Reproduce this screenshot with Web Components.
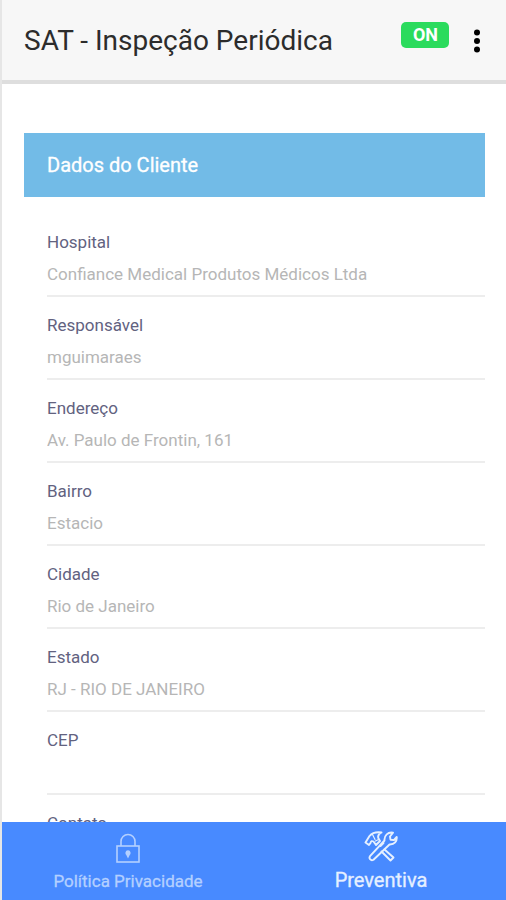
<!DOCTYPE html>
<html lang="pt-BR">
<head>
<meta charset="utf-8">
<meta name="viewport" content="width=device-width, initial-scale=1">
<title>SAT - Inspeção Periódica</title>
<style>
body { margin: 0; font-family: Roboto, "Liberation Sans", sans-serif; background: #fff; }
</style>
</head>
<body>
<sat-app>
  <sat-header slot="header" status="ON">SAT - Inspeção Periódica</sat-header>
  <sat-section heading="Dados do Cliente">
    <sat-field label="Hospital" value="Confiance Medical Produtos Médicos Ltda"></sat-field>
    <sat-field label="Responsável" value="mguimaraes"></sat-field>
    <sat-field label="Endereço" value="Av. Paulo de Frontin, 161"></sat-field>
    <sat-field label="Bairro" value="Estacio"></sat-field>
    <sat-field label="Cidade" value="Rio de Janeiro"></sat-field>
    <sat-field label="Estado" value="RJ - RIO DE JANEIRO"></sat-field>
    <sat-field label="CEP" value=""></sat-field>
    <sat-field label="Contato" value=""></sat-field>
  </sat-section>
  <sat-tabs slot="footer">
    <sat-tab icon="lock">Política Privacidade</sat-tab>
    <sat-tab icon="tools" selected>Preventiva</sat-tab>
  </sat-tabs>
</sat-app>
<script>
const define = (name, render) => customElements.define(name, class extends HTMLElement {
  constructor() {
    super();
    this.attachShadow({ mode: 'open' });
  }
  connectedCallback() {
    this.shadowRoot.innerHTML = render(this);
  }
});

define('sat-app', () => `
  <style>
    :host { display: flex; flex-direction: column; height: 100vh; box-sizing: border-box; border-left: 2px solid #e6e6e6; }
    main { flex: 1; min-height: 0; overflow-y: auto; scrollbar-width: none; padding: 49px 21px 20px 22px; }
  </style>
  <slot name="header"></slot>
  <main><slot></slot></main>
  <slot name="footer"></slot>`);

define('sat-header', el => `
  <style>
    :host { display: flex; align-items: center; height: 78px; padding: 2px 19px 0 22px; background: #f7f7f7; border-bottom: 4px solid #dedede; }
    h1 { flex: 1; margin: 0; font-size: 28px; line-height: 36px; font-weight: 400; color: #2c2c2c; white-space: nowrap; }
    .status { align-self: flex-start; margin: 20px 18px 0 0; width: 48px; padding-left: 1px; box-sizing: border-box; border-radius: 5px; background: #2bdb5d; color: #fff; font-size: 18px; line-height: 26px; font-weight: 700; text-align: center; }
    button { border: 0; background: none; padding: 0; width: 20px; height: 32px; }
    svg { display: block; margin: auto; }
  </style>
  <h1><slot></slot></h1>
  <span class="status">${el.getAttribute('status')}</span>
  <button aria-label="Menu"><svg width="8" height="24" viewBox="0 0 8 24"><circle cx="4" cy="3.4" r="3"/><circle cx="4" cy="12" r="3"/><circle cx="4" cy="20.6" r="3"/></svg></button>`);

define('sat-section', el => `
  <style>
    :host { display: block; }
    h2 { margin: 0 0 17px; padding: 0 23px; font-size: 20px; line-height: 64px; font-weight: 400; color: #fff; background: #72bbe7; -webkit-text-stroke: 0.3px #fff; }
    .fields { padding-left: 23px; }
  </style>
  <h2>${el.getAttribute('heading')}</h2>
  <div class="fields"><slot></slot></div>`);

define('sat-field', el => `
  <style>
    :host { display: flex; flex-direction: column; gap: 11px; padding: 18px 0 10px; border-bottom: 2px solid #ededed; }
    label { font-size: 17px; line-height: 20px; color: #62627f; }
    input { width: 100%; height: 22px; padding: 0; border: 0; outline: 0; background: none; font: 400 17px/22px Roboto, "Liberation Sans", sans-serif; color: #b6b6b6; }
  </style>
  <label for="value">${el.getAttribute('label')}</label>
  <input id="value" type="text" readonly value="${el.getAttribute('value')}">`);

define('sat-tabs', () => `
  <style>
    :host { display: grid; grid-template-columns: 1fr 1fr; height: 78px; background: #488aff; }
  </style>
  <slot></slot>`);

const icons = {
  lock: `<svg width="26" height="32" viewBox="0 0 26 32" fill="none" stroke="currentColor" stroke-width="1.6"><rect x="2" y="13" width="22" height="16"/><path d="M6 13V8.500a7 7 0 0 1 14 0V13"/><path d="M13 18a2 2 0 0 1 1 3.600l-1 2-1-2a2 2 0 0 1 1-3.600z" fill="currentColor"/></svg>`,
  tools: `<svg width="34" height="32" viewBox="0 0 34 32" fill="none" stroke="currentColor" stroke-width="1.9" stroke-linejoin="round" stroke-linecap="round"><path d="M1.500 11.500 5.500 5C8.500 1.500 13 .9 17.500 1.500 14.500 3 13.500 5 14.500 7.500l1.500 2.500-4 4-2.500-3.500c-1.500-.8-2.500-.5-3 1.500L5 14z"/><path d="M29 1.700 26 5.500l.5 3.200 3.500.3 2.700-3c.5 4.200-2.200 7.700-7.200 7.500L9.500 28.700c-2.500 1.500-5-1-3.500-3.500L20.500 9.500C20 4.500 24 .7 29 1.700z"/><path d="m16.500 15 3-3M20.500 18.500 29.500 26.500l-3 3-9-9"/><path d="m8.500 3.500 2.500 5M11.500 10l3-1.500" stroke-width="1.2"/></svg>`
};

define('sat-tab', el => `
  <style>
    :host { display: block; color: #b4d0ff; font-size: 17px; -webkit-text-stroke: 0.3px currentColor; }
    :host([selected]) { color: #e6f0ff; font-size: 20px; }
    button { width: 100%; height: 100%; border: 0; background: none; padding: 11px 0 7px; display: flex; flex-direction: column; align-items: center; justify-content: space-between; font: inherit; line-height: 24px; color: inherit; }
    :host([selected]) button { padding: 9px 0 8px 2px; }
    svg { display: block; }
  </style>
  <button>${icons[el.getAttribute('icon')]}<span><slot></slot></span></button>`);
</script>
</body>
</html>
